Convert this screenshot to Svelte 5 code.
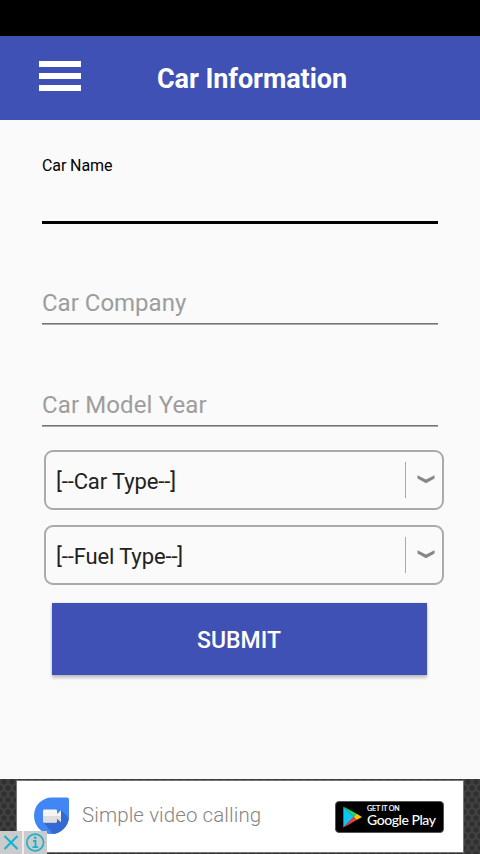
<script>
  let carName = $state('');
  let company = $state('');
  let modelYear = $state('');

  const selects = ['[--Car Type--]', '[--Fuel Type--]'];
</script>

<div class="screen">
  <div class="status-bar"></div>

  <header>
    <button type="button" class="menu" aria-label="menu">
      <span></span>
      <span></span>
      <span></span>
    </button>
    <h1>Car Information</h1>
  </header>

  <main>
    <label class="field active">
      <span>Car Name</span>
      <input bind:value={carName} />
    </label>
    <label class="field">
      <input placeholder="Car Company" bind:value={company} />
    </label>
    <label class="field">
      <input class="year" placeholder="Car Model Year" bind:value={modelYear} />
    </label>

    <div class="selects">
      {#each selects as text}
        <button type="button" class="select">
          <span class="value">{text}</span>
          <svg width="18" height="10" viewBox="0 0 18 10">
            <path d="M0.5 0.3 L9 4.5 L17.5 0.3 V3.5 L9 8.3 L0.5 3.5 Z" fill="#868686" />
          </svg>
        </button>
      {/each}
    </div>

    <button type="button" class="submit">SUBMIT</button>
  </main>

  <footer>
    <svg class="mesh" width="480" height="75">
      <defs>
        <pattern id="mesh" width="8" height="12" patternUnits="userSpaceOnUse">
          <rect width="8" height="12" fill="#414141" />
          <circle cx="4" cy="3" r="2.7" fill="#303030" />
          <circle cx="0" cy="9" r="2.7" fill="#303030" />
          <circle cx="8" cy="9" r="2.7" fill="#303030" />
        </pattern>
      </defs>
      <rect width="480" height="75" fill="url(#mesh)" />
    </svg>

    <div class="ad">
      <svg class="duo" width="36" height="38" viewBox="0 0 36 38">
        <defs>
          <clipPath id="drop">
            <path d="M17.5 0.5 H33 Q35 0.5 35 2.5 V19 A17.5 18.3 0 1 1 17.5 0.5 Z" />
          </clipPath>
        </defs>
        <g clip-path="url(#drop)">
          <rect width="36" height="38" fill="#4285f4" />
          <path d="M27 13 L36 22 V38 H20 L10 26 L23 23 Z" fill="#3269d2" />
        </g>
        <path d="M10.3 12.5 H21.7 Q23 12.5 23 13.8 V17 L27 13.3 V25 L23 21.5 V24.2 Q23 25.5 21.7 25.5 H10.3 Q9 25.5 9 24.2 V13.8 Q9 12.5 10.3 12.5 Z" fill="#f5f5f5" />
        <path d="M9 19 H27 V25 L23 21.5 V24.2 Q23 25.5 21.7 25.5 H10.3 Q9 25.5 9 24.2 Z" fill="#dedede" />
      </svg>
      <p>Simple video calling</p>
      <div class="badge">
        <svg width="19" height="22" viewBox="0 0 19 22">
          <path d="M0.3 0.8 L10.8 11 L0.3 21.5 Z" fill="#10c4f4" />
          <path d="M0.3 0.5 L13.7 7.7 L10.5 11 Z" fill="#12dc77" />
          <path d="M13.7 7.7 L19 11 L13.7 14.1 L10.5 11 Z" fill="#ffc50b" />
          <path d="M10.5 11 L13.7 14.1 L0.3 21.7 Z" fill="#f23a4a" />
        </svg>
        <div>
          <small>GET IT ON</small>
          <strong>Google Play</strong>
        </div>
      </div>
    </div>

    <div class="ad-choices">
      <svg width="22" height="23" viewBox="0 0 22 23">
        <path d="M4.5 5 L17.5 18 M17.5 5 L4.5 18" stroke="#12b2d0" stroke-width="2" />
      </svg>
      <svg width="23" height="23" viewBox="0 0 23 23">
        <g fill="none" stroke="#12b2d0">
          <circle cx="11.2" cy="11.5" r="8.4" stroke-width="1.6" />
          <path d="M9 9.8 H11.5 V16 M8.5 16.2 H14.2" stroke-width="1.8" />
        </g>
        <circle cx="11.2" cy="6.8" r="1.3" fill="#12b2d0" />
      </svg>
    </div>
  </footer>
</div>

<style>
  :global(body) {
    margin: 0;
    background: #fafafa;
  }

  .screen {
    display: flex;
    flex-direction: column;
    width: 480px;
    height: 854px;
    overflow: hidden;
    background: #fafafa;
    font-family: Roboto, "Liberation Sans", sans-serif;
  }

  button {
    padding: 0;
    border: none;
    font-family: inherit;
  }

  .status-bar {
    height: 36px;
    background: #000;
  }

  header {
    display: flex;
    align-items: center;
    height: 84px;
    background: #3f51b5;
  }

  .menu {
    display: flex;
    flex-direction: column;
    gap: 6px;
    width: 42px;
    margin: 0 76px 4px 39px;
    background: none;
  }

  .menu span {
    height: 6px;
    background: #fff;
  }

  h1 {
    margin: 2px 0 0;
    color: #fff;
    font-size: 27px;
    font-weight: 700;
    line-height: 32px;
    letter-spacing: -0.07px;
    white-space: nowrap;
  }

  main {
    display: flex;
    flex: 1;
    flex-direction: column;
    padding: 0 42px;
  }

  .field {
    display: flex;
    flex-direction: column;
    justify-content: flex-end;
    box-sizing: border-box;
    height: 102px;
    border-bottom: 1px solid #777;
    box-shadow: inset 0 -1px #aaa;
  }

  /* the hairline is darker on its upper pixel */
  .field:not(.active) {
    border-bottom: 1px solid #aaa;
    box-shadow: inset 0 -1px #737373;
    padding-bottom: 1px;
  }

  .field.active {
    height: 104px;
    margin-bottom: -1px;
    border-bottom: 3px solid #000;
    box-shadow: none;
  }

  .field span {
    font-size: 16px;
    line-height: 20px;
    letter-spacing: -0.1px;
    color: #000;
  }

  input {
    height: 40px;
    padding: 0;
    border: none;
    outline: none;
    background: none;
    font-family: inherit;
    font-size: 24px;
  }

  .active input {
    height: 45px;
  }

  .year {
    letter-spacing: 0.12px;
  }

  input::placeholder {
    color: #9d9d9d;
    opacity: 1;
  }

  .selects {
    display: flex;
    flex-direction: column;
    gap: 15px;
    width: 400px;
    margin: 23px 0 18px 2px;
  }

  .select {
    display: flex;
    align-items: center;
    box-sizing: border-box;
    height: 60px;
    padding: 0 7px 0 10px;
    border: 2px solid #aaa;
    border-radius: 9px;
    background: #fafafa;
  }

  .value {
    flex: 1;
    height: 36px;
    margin-right: 11px;
    border-right: 1px solid #aaa;
    color: #212121;
    font-size: 22px;
    line-height: 40px;
    letter-spacing: -0.12px;
    text-align: left;
  }

  .submit {
    width: 375px;
    height: 72px;
    margin-left: 10px;
    padding: 2px 1px 0 0;
    background: #3f51b5;
    box-shadow: 0 3px 3px rgba(0, 0, 0, 0.22), 0 0 2px rgba(0, 0, 0, 0.14);
    color: #fff;
    font-size: 23px;
    font-weight: 500;
  }

  footer {
    position: relative;
    height: 75px;
    background: #383838;
  }

  .mesh {
    display: block;
  }

  .ad {
    position: absolute;
    top: 1px;
    left: 16px;
    display: flex;
    align-items: center;
    box-sizing: border-box;
    width: 448px;
    height: 73px;
    padding: 0 19px 0 17px;
    border: 1px solid #777;
    background: #fff;
  }

  .duo {
    margin-bottom: 1px;
  }

  .ad p {
    flex: 1;
    margin: 0 0 3px 12px;
    color: #858585;
    font-size: 20.5px;
    font-weight: 300;
    letter-spacing: 0.09px;
    white-space: nowrap;
  }

  .badge {
    display: flex;
    align-items: center;
    gap: 5px;
    box-sizing: border-box;
    width: 109px;
    height: 32px;
    padding-left: 7px;
    border: 1px solid #555;
    border-radius: 4px;
    background: #000;
    color: #fff;
    font-family: Lato, sans-serif;
  }

  .badge div {
    display: flex;
    flex-direction: column;
  }

  small {
    font-size: 7px;
    line-height: 7px;
    letter-spacing: -0.1px;
    -webkit-text-stroke: 0.2px #fff;
  }

  strong {
    font-size: 14px;
    font-weight: 500;
    line-height: 16px;
    letter-spacing: -0.45px;
    white-space: nowrap;
  }

  .ad-choices {
    position: absolute;
    bottom: 0;
    left: 0;
    display: flex;
    gap: 2px;
    background: #ececec;
  }

  .ad-choices svg {
    display: block;
    background: #cbcbcb;
  }
</style>
